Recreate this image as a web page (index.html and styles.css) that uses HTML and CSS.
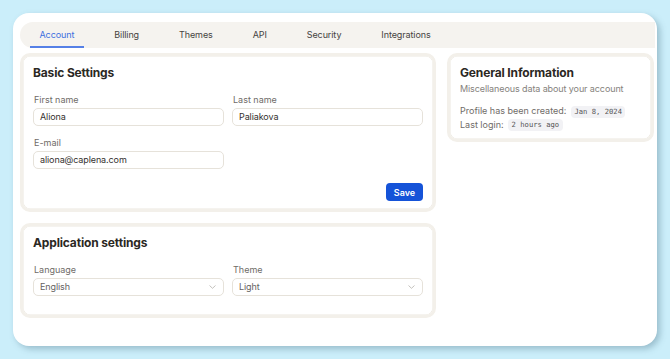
FILE: index.html
```html
<!DOCTYPE html>
<html>
<head>
<meta charset="utf-8">
<link rel="stylesheet" href="styles.css">
</head>
<body>
<div class="window">
  <nav class="tabs">
    <div class="tab active">Account</div>
    <div class="tab">Billing</div>
    <div class="tab">Themes</div>
    <div class="tab">API</div>
    <div class="tab">Security</div>
    <div class="tab">Integrations</div>
  </nav>
  <div class="content">
    <div class="col">
      <section class="card basic">
        <h2 class="card-title">Basic Settings</h2>
        <div class="fields">
          <div class="field">
            <label class="label">First name</label>
            <div class="input">Aliona</div>
          </div>
          <div class="field">
            <label class="label">Last name</label>
            <div class="input">Paliakova</div>
          </div>
          <div class="field">
            <label class="label">E-mail</label>
            <div class="input">aliona@caplena.com</div>
          </div>
        </div>
        <div class="actions"><button class="btn">Save</button></div>
      </section>
      <section class="card app">
        <h2 class="card-title">Application settings</h2>
        <div class="fields">
          <div class="field">
            <label class="label">Language</label>
            <div class="input select"><span>English</span><svg class="chev" width="7" height="4" viewBox="0 0 7 4"><path d="M0.5 0.5 L3.5 3.3 L6.5 0.5" fill="none" stroke="#b5b2ad" stroke-width="0.8"/></svg></div>
          </div>
          <div class="field">
            <label class="label">Theme</label>
            <div class="input select"><span>Light</span><svg class="chev" width="7" height="4" viewBox="0 0 7 4"><path d="M0.5 0.5 L3.5 3.3 L6.5 0.5" fill="none" stroke="#b5b2ad" stroke-width="0.8"/></svg></div>
          </div>
        </div>
      </section>
    </div>
    <div class="col">
      <section class="card info">
        <h2 class="card-title">General Information</h2>
        <p class="sub">Miscellaneous data about your account</p>
        <div class="meta">
          <div class="meta-row">Profile has been created: <code class="badge">Jan 8, 2024</code></div>
          <div class="meta-row">Last login: <code class="badge">2 hours ago</code></div>
        </div>
      </section>
    </div>
  </div>
</div>
</body>
</html>
```
FILE: styles.css
```css
html, body {
  margin: 0;
  padding: 0;
}
body {
  background: #cbeefa;
  font-family: Inter, "Noto Sans", sans-serif;
  width: 670px;
  height: 359px;
  overflow: hidden;
}
.window {
  box-sizing: border-box;
  width: 644px;
  height: 333px;
  margin: 13px;
  background: #ffffff;
  border-radius: 16px;
  padding: 9px 2px 0 7px;
  box-shadow: 3px 3px 6px rgba(60, 100, 120, 0.35);
  overflow: hidden;
}
.tabs {
  display: flex;
  gap: 21px;
  height: 26px;
  background: #f5f3ef;
  border-radius: 13px 0 0 13px;
  padding-left: 10px;
}
.tab {
  box-sizing: border-box;
  height: 26px;
  line-height: 26px;
  padding: 0 9.5px;
  font-size: 9px;
  letter-spacing: -0.1px;
  color: #46433f;
  border-bottom: 2px solid transparent;
}
.tab.active {
  color: #3d6fe0;
  border-bottom-color: #5580e6;
}
.content {
  display: grid;
  grid-template-columns: 416px 207px;
  gap: 11px;
  margin-top: 5px;
  align-items: start;
}
.col {
  display: flex;
  flex-direction: column;
  gap: 11px;
}
.card {
  background: #fff;
  border: 3px solid #f3f0ea;
  border-radius: 10px;
  padding: 9px 10px 8px 10px;
  box-shadow: inset 0 0 0 0.5px #ebe7df;
}
.card.app {
  padding-bottom: 19px;
}
.card-title {
  margin: 0;
  font-size: 12px;
  line-height: 16px;
  font-weight: 700;
  color: #2b2823;
  letter-spacing: -0.15px;
}
.fields {
  display: grid;
  grid-template-columns: 191px 191px;
  column-gap: 8px;
  row-gap: 11px;
  margin-top: 13px;
}
.field {
  display: flex;
  flex-direction: column;
  gap: 2px;
}
.label {
  font-size: 9px;
  line-height: 12px;
  color: #6f6c68;
  padding-left: 1px;
}
.input {
  box-sizing: border-box;
  height: 18px;
  border: 1px solid #e6e2da;
  border-radius: 5px;
  padding: 0 6px;
  font-size: 9px;
  letter-spacing: -0.1px;
  line-height: 16px;
  color: #34312e;
}
.select {
  display: flex;
  align-items: center;
  justify-content: space-between;
  color: #66635f;
  padding-right: 7px;
}
.chev {
  display: block;
}
.actions {
  display: flex;
  justify-content: flex-end;
  margin-top: 14px;
}
.btn {
  box-sizing: border-box;
  height: 18px;
  width: 37px;
  border: none;
  border-radius: 4px;
  background: #1553d8;
  color: #fff;
  font-family: Inter, sans-serif;
  font-size: 9px;
  font-weight: 600;
  padding: 0;
}
.sub {
  margin: 2px 0 0 0;
  font-size: 9px;
  line-height: 12px;
  letter-spacing: -0.1px;
  color: #85827d;
}
.meta {
  margin-top: 9px;
  display: flex;
  flex-direction: column;
  gap: 0;
}
.meta-row {
  font-size: 9px;
  line-height: 13px;
  color: #6f6c68;
}
.badge {
  display: inline-block;
  font-family: "DejaVu Sans Mono", "Liberation Mono", monospace;
  font-size: 7.2px;
  line-height: 12px;
  padding: 0 3.5px;
  margin-left: 2px;
  background: #f2f2f5;
  border-radius: 4px;
  color: #555;
  vertical-align: middle;
}
```
